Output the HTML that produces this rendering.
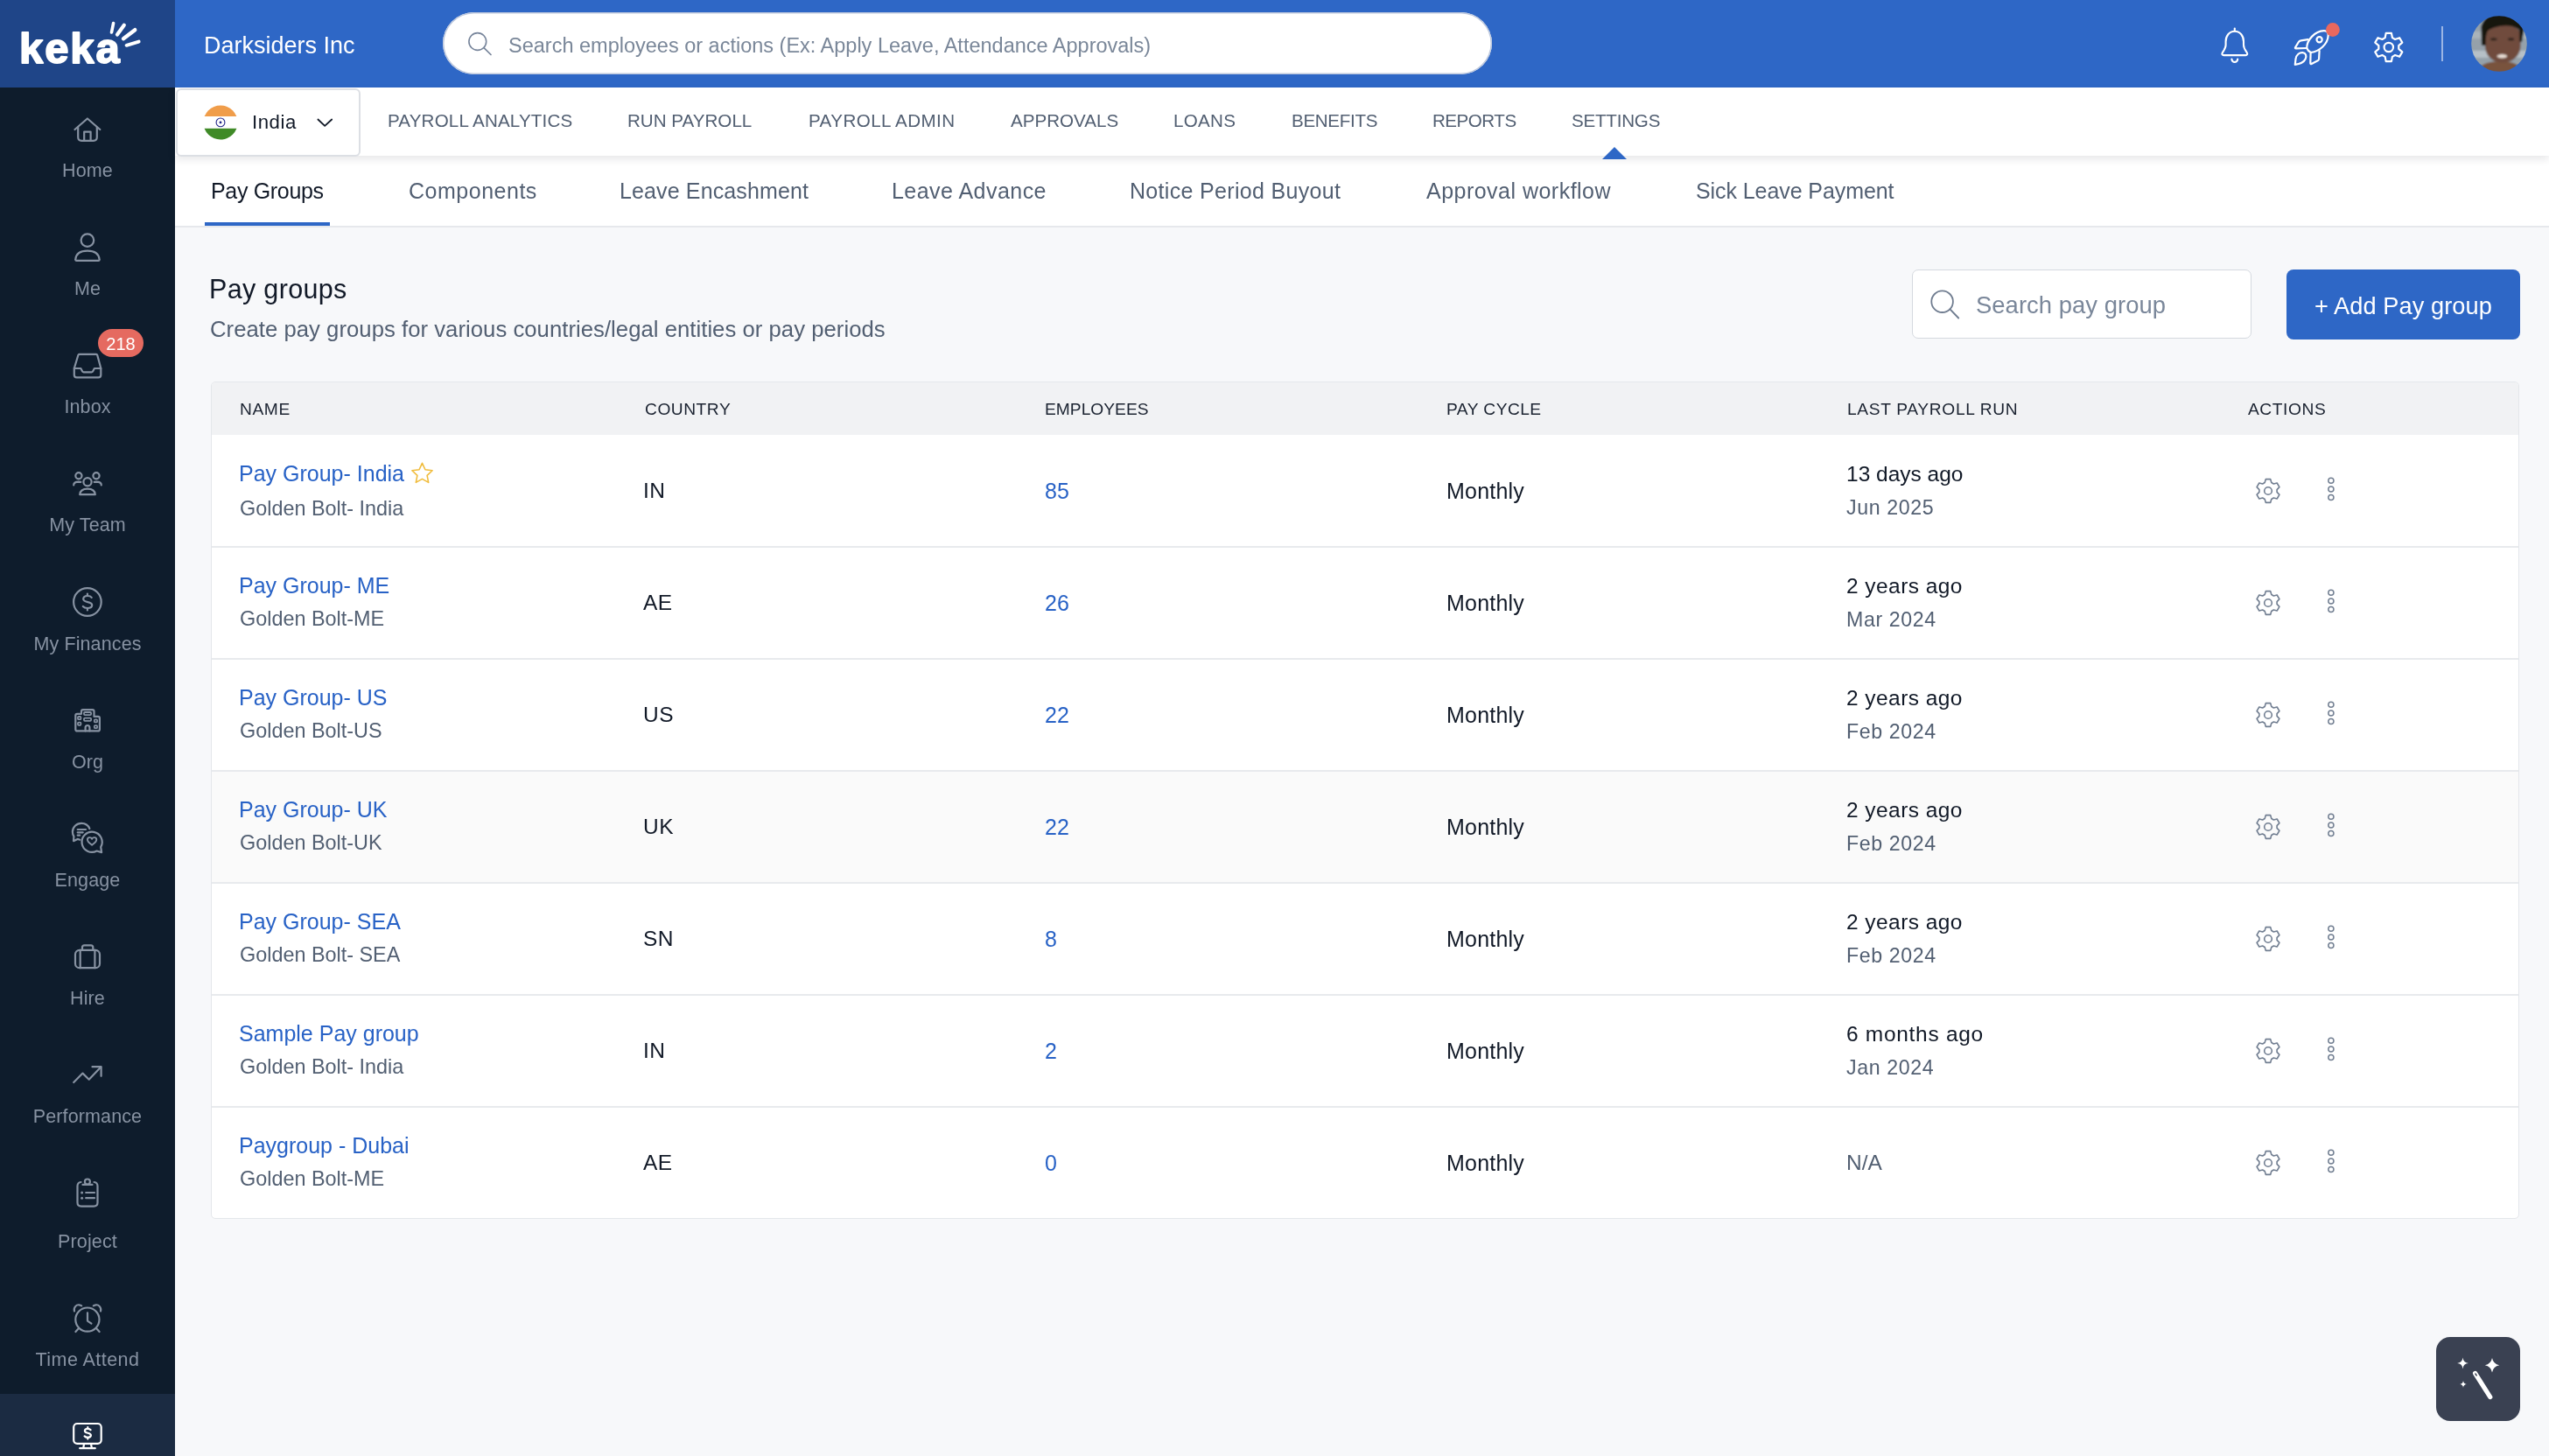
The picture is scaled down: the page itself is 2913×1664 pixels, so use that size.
<!DOCTYPE html>
<html><head><meta charset="utf-8"><style>
html,body{margin:0;padding:0;width:2913px;height:1664px;overflow:hidden;background:#f7f8fa;font-family:"Liberation Sans", sans-serif;}
.r{position:absolute;}
.t{position:absolute;white-space:nowrap;line-height:1;will-change:transform;}
svg.ov{position:absolute;left:0;top:0;z-index:10;pointer-events:none;}
</style></head><body>
<div class="r" style="left:0px;top:0px;width:2913px;height:1664px;background:#f7f8fa;"></div><div class="r" style="left:0px;top:0px;width:200px;height:1664px;background:#0e1c2c;"></div><div class="r" style="left:0px;top:0px;width:200px;height:100px;background:#1f4588;"></div><div class="r" style="left:200px;top:0px;width:2713px;height:100px;background:#2e67c6;"></div><div class="r" style="left:0px;top:1593px;width:200px;height:71px;background:#1b2b42;"></div><div class="r" style="left:200px;top:100px;width:2713px;height:78px;background:#ffffff;box-shadow:0 4px 9px rgba(16,24,40,0.10);z-index:2"></div><div class="r" style="left:200px;top:178px;width:2713px;height:80px;background:#ffffff;border-bottom:2px solid #e6e8ec;"></div>
<div class="t" style="top:38.5px;font-size:27px;color:#ffffff;left:232.5px;">Darksiders Inc</div><div class="r" style="left:506px;top:14px;width:1199px;height:71px;background:#ffffff;border-radius:36px;box-shadow:inset 0 0 0 1.5px #bcc7dc;"></div><div class="t" style="top:40.8px;font-size:23.5px;color:#7a8799;left:581.0px;">Search employees or actions (Ex: Apply Leave, Attendance Approvals)</div><div class="r" style="left:200.5px;top:100.5px;width:211.5px;height:78.5px;background:#ffffff;border:2px solid #dcdfe4;border-radius:6px;box-sizing:border-box;z-index:3"></div><div class="t" style="top:129.4px;font-size:22.2px;color:#111927;letter-spacing:0.55px;left:287.5px;z-index:4">India</div><div class="t" style="top:127.9px;font-size:20.6px;color:#525f72;letter-spacing:0.156px;left:443.0px;z-index:4">PAYROLL ANALYTICS</div><div class="t" style="top:127.9px;font-size:20.6px;color:#525f72;left:717.0px;z-index:4">RUN PAYROLL</div><div class="t" style="top:127.9px;font-size:20.6px;color:#525f72;letter-spacing:0.417px;left:924.0px;z-index:4">PAYROLL ADMIN</div><div class="t" style="top:127.9px;font-size:20.6px;color:#525f72;left:1155.0px;z-index:4">APPROVALS</div><div class="t" style="top:127.9px;font-size:20.6px;color:#525f72;letter-spacing:0.27px;left:1341.4px;z-index:4">LOANS</div><div class="t" style="top:127.9px;font-size:20.6px;color:#525f72;letter-spacing:-0.33px;left:1476.0px;z-index:4">BENEFITS</div><div class="t" style="top:127.9px;font-size:20.6px;color:#525f72;letter-spacing:-0.5px;left:1637.2px;z-index:4">REPORTS</div><div class="t" style="top:127.9px;font-size:20.6px;color:#525f72;letter-spacing:-0.23px;left:1796.4px;z-index:4">SETTINGS</div><div class="t" style="top:205.8px;font-size:25px;color:#111927;letter-spacing:-0.33px;left:241.0px;">Pay Groups</div><div class="t" style="top:205.8px;font-size:25px;color:#525f72;letter-spacing:0.51px;left:467.0px;">Components</div><div class="t" style="top:205.8px;font-size:25px;color:#525f72;letter-spacing:0.13px;left:708.0px;">Leave Encashment</div><div class="t" style="top:205.8px;font-size:25px;color:#525f72;letter-spacing:0.46px;left:1019.0px;">Leave Advance</div><div class="t" style="top:205.8px;font-size:25px;color:#525f72;letter-spacing:0.32px;left:1291.4px;">Notice Period Buyout</div><div class="t" style="top:205.8px;font-size:25px;color:#525f72;letter-spacing:0.48px;left:1630.4px;">Approval workflow</div><div class="t" style="top:205.8px;font-size:25px;color:#525f72;letter-spacing:-0.08px;left:1937.8px;">Sick Leave Payment</div><div class="r" style="left:234px;top:254px;width:143px;height:4px;background:#2e67c6;"></div><div class="t" style="top:314.6px;font-size:30.5px;color:#111927;letter-spacing:0.33px;left:239.0px;">Pay groups</div><div class="t" style="top:364.2px;font-size:25.7px;color:#525f72;letter-spacing:0.03px;left:240.0px;">Create pay groups for various countries/legal entities or pay periods</div><div class="r" style="left:2185px;top:308px;width:388px;height:79px;background:#ffffff;border:1.5px solid #d5d9df;border-radius:7px;box-sizing:border-box;"></div><div class="t" style="top:335.4px;font-size:27.4px;color:#7a879a;letter-spacing:0.05px;left:2258.0px;">Search pay group</div><div class="r" style="left:2613px;top:308px;width:267px;height:80px;background:#2e67c6;border-radius:8px;"></div><div class="t" style="top:335.6px;font-size:27.2px;color:#ffffff;letter-spacing:0.07px;left:2645.0px;">+ Add Pay group</div><div class="r" style="left:241px;top:436px;width:2638px;height:957px;background:#ffffff;border:1.5px solid #e4e7eb;border-radius:5px;box-sizing:border-box;"></div><div class="r" style="left:242px;top:437px;width:2636px;height:60px;background:#f1f2f4;border-radius:4px 4px 0 0;"></div><div class="t" style="top:458.2px;font-size:19.2px;color:#1a2230;letter-spacing:0.6px;left:274.4px;">NAME</div><div class="t" style="top:458.2px;font-size:19.2px;color:#1a2230;letter-spacing:0.53px;left:736.5px;">COUNTRY</div><div class="t" style="top:458.2px;font-size:19.2px;color:#1a2230;letter-spacing:0.02px;left:1194.3px;">EMPLOYEES</div><div class="t" style="top:458.2px;font-size:19.2px;color:#1a2230;letter-spacing:0.45px;left:1652.6px;">PAY CYCLE</div><div class="t" style="top:458.2px;font-size:19.2px;color:#1a2230;letter-spacing:0.66px;left:2110.5px;">LAST PAYROLL RUN</div><div class="t" style="top:458.2px;font-size:19.2px;color:#1a2230;letter-spacing:0.57px;left:2568.5px;">ACTIONS</div><div class="t" style="top:529.0px;font-size:25px;color:#2862c6;left:273.0px;">Pay Group- India</div><div class="t" style="top:570.3px;font-size:23.4px;color:#525f72;left:273.8px;">Golden Bolt- India</div><div class="t" style="top:549.4px;font-size:24.5px;color:#111927;letter-spacing:0.5px;left:735.2px;">IN</div><div class="t" style="top:549.0px;font-size:25px;color:#2862c6;left:1194.3px;">85</div><div class="t" style="top:549.0px;font-size:25px;color:#111927;letter-spacing:0.22px;left:1652.6px;">Monthly</div><div class="t" style="top:529.8px;font-size:24.5px;color:#111927;left:2109.5px;">13 days ago</div><div class="t" style="top:568.9px;font-size:23.2px;color:#525f72;letter-spacing:0.6px;left:2110.0px;">Jun 2025</div><div class="r" style="left:242px;top:624px;width:2636px;height:2px;background:#e8eaed;"></div><div class="t" style="top:657.0px;font-size:25px;color:#2862c6;left:273.0px;">Pay Group- ME</div><div class="t" style="top:696.1px;font-size:23.4px;color:#525f72;left:273.8px;">Golden Bolt-ME</div><div class="t" style="top:677.4px;font-size:24.5px;color:#111927;letter-spacing:0.5px;left:735.2px;">AE</div><div class="t" style="top:677.0px;font-size:25px;color:#2862c6;left:1194.3px;">26</div><div class="t" style="top:677.0px;font-size:25px;color:#111927;letter-spacing:0.22px;left:1652.6px;">Monthly</div><div class="t" style="top:657.8px;font-size:24.5px;color:#111927;letter-spacing:0.44px;left:2110.4px;">2 years ago</div><div class="t" style="top:696.9px;font-size:23.2px;color:#525f72;letter-spacing:0.6px;left:2110.0px;">Mar 2024</div><div class="r" style="left:242px;top:752px;width:2636px;height:2px;background:#e8eaed;"></div><div class="t" style="top:785.0px;font-size:25px;color:#2862c6;left:273.0px;">Pay Group- US</div><div class="t" style="top:824.1px;font-size:23.4px;color:#525f72;left:273.8px;">Golden Bolt-US</div><div class="t" style="top:805.4px;font-size:24.5px;color:#111927;letter-spacing:0.5px;left:735.2px;">US</div><div class="t" style="top:805.0px;font-size:25px;color:#2862c6;left:1194.3px;">22</div><div class="t" style="top:805.0px;font-size:25px;color:#111927;letter-spacing:0.22px;left:1652.6px;">Monthly</div><div class="t" style="top:785.8px;font-size:24.5px;color:#111927;letter-spacing:0.44px;left:2110.4px;">2 years ago</div><div class="t" style="top:824.9px;font-size:23.2px;color:#525f72;letter-spacing:0.6px;left:2110.0px;">Feb 2024</div><div class="r" style="left:242px;top:881px;width:2636px;height:127px;background:#fafafa;"></div><div class="r" style="left:242px;top:880px;width:2636px;height:2px;background:#e8eaed;"></div><div class="t" style="top:913.0px;font-size:25px;color:#2862c6;left:273.0px;">Pay Group- UK</div><div class="t" style="top:952.1px;font-size:23.4px;color:#525f72;left:273.8px;">Golden Bolt-UK</div><div class="t" style="top:933.4px;font-size:24.5px;color:#111927;letter-spacing:0.5px;left:735.2px;">UK</div><div class="t" style="top:933.0px;font-size:25px;color:#2862c6;left:1194.3px;">22</div><div class="t" style="top:933.0px;font-size:25px;color:#111927;letter-spacing:0.22px;left:1652.6px;">Monthly</div><div class="t" style="top:913.8px;font-size:24.5px;color:#111927;letter-spacing:0.44px;left:2110.4px;">2 years ago</div><div class="t" style="top:952.9px;font-size:23.2px;color:#525f72;letter-spacing:0.6px;left:2110.0px;">Feb 2024</div><div class="r" style="left:242px;top:1008px;width:2636px;height:2px;background:#e8eaed;"></div><div class="t" style="top:1041.0px;font-size:25px;color:#2862c6;left:273.0px;">Pay Group- SEA</div><div class="t" style="top:1080.1px;font-size:23.4px;color:#525f72;left:273.8px;">Golden Bolt- SEA</div><div class="t" style="top:1061.4px;font-size:24.5px;color:#111927;letter-spacing:0.5px;left:735.2px;">SN</div><div class="t" style="top:1061.0px;font-size:25px;color:#2862c6;left:1194.3px;">8</div><div class="t" style="top:1061.0px;font-size:25px;color:#111927;letter-spacing:0.22px;left:1652.6px;">Monthly</div><div class="t" style="top:1041.8px;font-size:24.5px;color:#111927;letter-spacing:0.44px;left:2110.4px;">2 years ago</div><div class="t" style="top:1080.9px;font-size:23.2px;color:#525f72;letter-spacing:0.6px;left:2110.0px;">Feb 2024</div><div class="r" style="left:242px;top:1136px;width:2636px;height:2px;background:#e8eaed;"></div><div class="t" style="top:1169.0px;font-size:25px;color:#2862c6;left:273.0px;">Sample Pay group</div><div class="t" style="top:1208.1px;font-size:23.4px;color:#525f72;left:273.8px;">Golden Bolt- India</div><div class="t" style="top:1189.4px;font-size:24.5px;color:#111927;letter-spacing:0.5px;left:735.2px;">IN</div><div class="t" style="top:1189.0px;font-size:25px;color:#2862c6;left:1194.3px;">2</div><div class="t" style="top:1189.0px;font-size:25px;color:#111927;letter-spacing:0.22px;left:1652.6px;">Monthly</div><div class="t" style="top:1169.8px;font-size:24.5px;color:#111927;letter-spacing:0.7px;left:2110.4px;">6 months ago</div><div class="t" style="top:1208.9px;font-size:23.2px;color:#525f72;letter-spacing:0.6px;left:2110.0px;">Jan 2024</div><div class="r" style="left:242px;top:1264px;width:2636px;height:2px;background:#e8eaed;"></div><div class="t" style="top:1297.0px;font-size:25px;color:#2862c6;left:273.0px;">Paygroup - Dubai</div><div class="t" style="top:1336.1px;font-size:23.4px;color:#525f72;left:273.8px;">Golden Bolt-ME</div><div class="t" style="top:1317.4px;font-size:24.5px;color:#111927;letter-spacing:0.5px;left:735.2px;">AE</div><div class="t" style="top:1317.0px;font-size:25px;color:#2862c6;left:1194.3px;">0</div><div class="t" style="top:1317.0px;font-size:25px;color:#111927;letter-spacing:0.22px;left:1652.6px;">Monthly</div><div class="t" style="top:1317.4px;font-size:24.5px;color:#525f72;left:2110.4px;">N/A</div><div class="t" style="top:185.1px;font-size:21.5px;color:#8792a2;letter-spacing:0.12px;left:-200.0px;width:600px;text-align:center;">Home</div><div class="t" style="top:320.3px;font-size:21.5px;color:#8792a2;letter-spacing:0.12px;left:-200.0px;width:600px;text-align:center;">Me</div><div class="t" style="top:455.3px;font-size:21.5px;color:#8792a2;letter-spacing:0.12px;left:-200.0px;width:600px;text-align:center;">Inbox</div><div class="t" style="top:590.3px;font-size:21.5px;color:#8792a2;letter-spacing:0.12px;left:-200.0px;width:600px;text-align:center;">My Team</div><div class="t" style="top:725.8px;font-size:21.5px;color:#8792a2;letter-spacing:0.12px;left:-200.0px;width:600px;text-align:center;">My Finances</div><div class="t" style="top:860.6px;font-size:21.5px;color:#8792a2;letter-spacing:0.12px;left:-200.0px;width:600px;text-align:center;">Org</div><div class="t" style="top:995.8px;font-size:21.5px;color:#8792a2;letter-spacing:0.12px;left:-200.0px;width:600px;text-align:center;">Engage</div><div class="t" style="top:1130.8px;font-size:21.5px;color:#8792a2;letter-spacing:0.12px;left:-200.0px;width:600px;text-align:center;">Hire</div><div class="t" style="top:1265.6px;font-size:21.5px;color:#8792a2;letter-spacing:0.12px;left:-200.0px;width:600px;text-align:center;">Performance</div><div class="t" style="top:1408.5px;font-size:21.5px;color:#8792a2;letter-spacing:0.12px;left:-200.0px;width:600px;text-align:center;">Project</div><div class="t" style="top:1543.8px;font-size:21.5px;color:#8792a2;letter-spacing:0.45px;left:-200.0px;width:600px;text-align:center;">Time Attend</div><div class="r" style="left:112px;top:376px;width:52px;height:32px;background:#e56a60;border-radius:16px;"></div><div class="t" style="top:383.0px;font-size:20px;color:#ffffff;left:-162.0px;width:600px;text-align:center;">218</div><div class="r" style="left:2784px;top:1528px;width:96px;height:96px;background:#3a4152;border-radius:16px;"></div>
<svg class="ov" width="2913" height="1664" viewBox="0 0 2913 1664"><text x="22" y="72" font-family="Liberation Sans" font-weight="700" font-size="49" fill="#fff" stroke="#fff" stroke-width="1.8" stroke-linejoin="round" letter-spacing="1.9">keka</text><line x1="127.5" y1="37" x2="129.6" y2="26.5" stroke="#fff" stroke-width="3.6" stroke-linecap="round"/><line x1="134" y1="39.5" x2="141.8" y2="28.8" stroke="#fff" stroke-width="4.2" stroke-linecap="round"/><line x1="141" y1="44.2" x2="154.2" y2="34.2" stroke="#fff" stroke-width="4.4" stroke-linecap="round"/><line x1="144.6" y1="51.8" x2="158.6" y2="47.6" stroke="#fff" stroke-width="4.0" stroke-linecap="round"/><circle cx="545.8" cy="47.5" r="9.9" stroke="#76849a" stroke-width="1.6" fill="none"/><line x1="553" y1="54.6" x2="561" y2="62.5" stroke="#76849a" stroke-width="1.7" stroke-linecap="round"/><path d="M2553.8,35.8 C2547.5,35.8 2543.6,41 2543.6,47.5 L2543.6,51.5 C2543.6,55 2541.5,57.5 2539.8,60.2 C2538.9,61.8 2539.6,63.1 2541.3,63.1 L2566.3,63.1 C2568,63.1 2568.7,61.8 2567.8,60.2 C2566.1,57.5 2564,55 2564,51.5 L2564,47.5 C2564,41 2560.1,35.8 2553.8,35.8 Z" stroke="#fff" stroke-width="2.1" fill="none" stroke-linecap="round" stroke-linejoin="round"/><line x1="2553.8" y1="32.6" x2="2553.8" y2="35.5" stroke="#fff" stroke-width="2.1" stroke-linecap="round"/><path d="M2550.4,67.6 A3.4,3.4 0 0 0 2557.2,67.6" stroke="#fff" stroke-width="2.1" fill="none" stroke-linecap="round" stroke-linejoin="round"/><path d="M2636.2,55 C2636.2,46 2645,35.6 2655.8,35.2 C2659,35.1 2660.8,37 2660.7,40.2 C2660.4,50.5 2650.5,58.6 2641,60 C2638.8,59 2637,57.2 2636.2,55 Z" stroke="#fff" stroke-width="2.2" fill="none" stroke-linejoin="round" stroke-linecap="round"/><circle cx="2650.6" cy="45.3" r="3.1" stroke="#fff" stroke-width="2.2" fill="none" stroke-linejoin="round" stroke-linecap="round"/><path d="M2637.5,45.2 L2629.5,46.4 Q2627.6,46.8 2626.7,48.3 L2623,54.3 Q2622.6,55.3 2623.8,55.3 L2636.2,55" stroke="#fff" stroke-width="2.2" fill="none" stroke-linejoin="round" stroke-linecap="round"/><path d="M2650.6,58.2 L2650.1,67.3 Q2650,68.7 2648.8,69.3 L2641.6,73 Q2640.3,73.6 2640.3,72.3 L2640.6,60.2" stroke="#fff" stroke-width="2.2" fill="none" stroke-linejoin="round" stroke-linecap="round"/><path d="M2622.8,73.8 L2623.5,67.5 C2624.2,62.3 2628,59.8 2631.5,60.1 C2635.2,60.5 2636.3,64 2634.6,67.6 C2632.6,71.6 2628.3,73.3 2622.8,73.8 Z" stroke="#fff" stroke-width="2.2" fill="none" stroke-linejoin="round" stroke-linecap="round"/><circle cx="2665.9" cy="34" r="7.9" fill="#e8685f"/><path d="M2725.64,43.17 L2726.67,37.90 L2732.93,37.90 L2733.96,43.17 L2737.10,44.99 L2742.18,43.24 L2745.31,48.66 L2741.26,52.19 L2741.26,55.81 L2745.31,59.34 L2742.18,64.76 L2737.10,63.01 L2733.96,64.83 L2732.93,70.10 L2726.67,70.10 L2725.64,64.83 L2722.50,63.01 L2717.42,64.76 L2714.29,59.34 L2718.34,55.81 L2718.34,52.19 L2714.29,48.66 L2717.42,43.24 L2722.50,44.99 Z" stroke="#fff" stroke-width="2.2" fill="none" stroke-linecap="round" stroke-linejoin="round"/><circle cx="2729.8" cy="54" r="5.2" stroke="#fff" stroke-width="2.2" fill="none"/><rect x="2790" y="30" width="2" height="40" fill="#9bb5e4"/><defs><clipPath id="av"><circle cx="2856" cy="50" r="31.8"/></clipPath></defs><defs><filter id="avb" x="-10%" y="-10%" width="120%" height="120%"><feGaussianBlur stdDeviation="1.1"/></filter></defs><g clip-path="url(#av)"><g filter="url(#avb)"><rect x="2820" y="14" width="72" height="72" fill="#95a1aa"/><rect x="2820" y="36" width="72" height="8" fill="#a9b3ba"/><rect x="2820" y="58" width="72" height="8" fill="#b6c0c7"/><path d="M2828,88 C2831,74 2842,70 2858,70 C2872,70 2882,74 2886,88 Z" fill="#79533c"/><path d="M2840,42 C2840,32 2848,28.5 2860,28.5 C2872,28.5 2880.5,32 2880.5,42 L2880.5,52 C2880.5,64 2871,71.5 2860,71.5 C2849,71.5 2840,64 2840,52 Z" fill="#6f4c3e"/><path d="M2836,52 L2835.5,30 C2839,19 2849,14 2860,14 C2873,14 2884,20 2884.5,34 L2882,48 L2879.6,48 C2879.2,41 2879.6,36.5 2878.2,33.4 C2872,29 2864,28.6 2858,29.8 C2850,31.3 2845,33.3 2843.4,35 C2841,38 2840.6,44 2840.6,52 Z" fill="#151210"/><ellipse cx="2859.4" cy="64.2" rx="5.8" ry="2.2" fill="#e9ded6"/><ellipse cx="2849.8" cy="44.8" rx="3.8" ry="1.5" fill="#2e201a"/><ellipse cx="2869.6" cy="44.8" rx="3.6" ry="1.5" fill="#2e201a"/></g></g><defs><clipPath id="fl"><circle cx="252" cy="140" r="19.6"/></clipPath></defs><g clip-path="url(#fl)"><rect x="232" y="120" width="40" height="13" fill="#f09d4a"/><rect x="232" y="133" width="40" height="13.8" fill="#ffffff"/><rect x="232" y="146.8" width="40" height="14" fill="#3f8a27"/></g><circle cx="252" cy="139.9" r="4.9" stroke="#23278a" stroke-width="1.1" fill="none"/><circle cx="252" cy="139.9" r="1.4" fill="#23278a"/><path d="M363.4,136.5 L371.2,143.8 L379.2,136.5" stroke="#111927" stroke-width="1.8" fill="none" stroke-linecap="round" stroke-linejoin="round"/><path d="M1831,182 L1845,168 L1859,182 Z" fill="#2e67c6"/><circle cx="2219.6" cy="344.7" r="12.3" stroke="#707d90" stroke-width="1.8" fill="none"/><line x1="2228.5" y1="353.3" x2="2238.2" y2="363.5" stroke="#707d90" stroke-width="1.9" stroke-linecap="round"/><path d="M482.50,529.30 L485.97,536.73 L494.10,537.73 L488.11,543.32 L489.67,551.37 L482.50,547.40 L475.33,551.37 L476.89,543.32 L470.90,537.73 L479.03,536.73 Z" stroke="#f0bc3c" stroke-width="1.6" fill="none" stroke-linecap="round" stroke-linejoin="round"/><path d="M2588.18,551.54 L2589.29,547.67 L2594.71,547.67 L2595.82,551.54 L2598.28,552.96 L2602.19,551.99 L2604.90,556.68 L2602.10,559.58 L2602.10,562.42 L2604.90,565.32 L2602.19,570.01 L2598.28,569.04 L2595.82,570.46 L2594.71,574.33 L2589.29,574.33 L2588.18,570.46 L2585.72,569.04 L2581.81,570.01 L2579.10,565.32 L2581.90,562.42 L2581.90,559.58 L2579.10,556.68 L2581.81,551.99 L2585.72,552.96 Z" stroke="#717e91" stroke-width="1.6" fill="none" stroke-linecap="round" stroke-linejoin="round"/><circle cx="2592" cy="561" r="4.3" stroke="#717e91" stroke-width="1.6" fill="none"/><circle cx="2663.9" cy="549.3" r="3.05" stroke="#717e91" stroke-width="1.5" fill="none"/><circle cx="2663.9" cy="559.0" r="3.05" stroke="#717e91" stroke-width="1.5" fill="none"/><circle cx="2663.9" cy="568.5" r="3.05" stroke="#717e91" stroke-width="1.5" fill="none"/><path d="M2588.18,679.54 L2589.29,675.67 L2594.71,675.67 L2595.82,679.54 L2598.28,680.96 L2602.19,679.99 L2604.90,684.68 L2602.10,687.58 L2602.10,690.42 L2604.90,693.32 L2602.19,698.01 L2598.28,697.04 L2595.82,698.46 L2594.71,702.33 L2589.29,702.33 L2588.18,698.46 L2585.72,697.04 L2581.81,698.01 L2579.10,693.32 L2581.90,690.42 L2581.90,687.58 L2579.10,684.68 L2581.81,679.99 L2585.72,680.96 Z" stroke="#717e91" stroke-width="1.6" fill="none" stroke-linecap="round" stroke-linejoin="round"/><circle cx="2592" cy="689" r="4.3" stroke="#717e91" stroke-width="1.6" fill="none"/><circle cx="2663.9" cy="677.3" r="3.05" stroke="#717e91" stroke-width="1.5" fill="none"/><circle cx="2663.9" cy="687.0" r="3.05" stroke="#717e91" stroke-width="1.5" fill="none"/><circle cx="2663.9" cy="696.5" r="3.05" stroke="#717e91" stroke-width="1.5" fill="none"/><path d="M2588.18,807.54 L2589.29,803.67 L2594.71,803.67 L2595.82,807.54 L2598.28,808.96 L2602.19,807.99 L2604.90,812.68 L2602.10,815.58 L2602.10,818.42 L2604.90,821.32 L2602.19,826.01 L2598.28,825.04 L2595.82,826.46 L2594.71,830.33 L2589.29,830.33 L2588.18,826.46 L2585.72,825.04 L2581.81,826.01 L2579.10,821.32 L2581.90,818.42 L2581.90,815.58 L2579.10,812.68 L2581.81,807.99 L2585.72,808.96 Z" stroke="#717e91" stroke-width="1.6" fill="none" stroke-linecap="round" stroke-linejoin="round"/><circle cx="2592" cy="817" r="4.3" stroke="#717e91" stroke-width="1.6" fill="none"/><circle cx="2663.9" cy="805.3" r="3.05" stroke="#717e91" stroke-width="1.5" fill="none"/><circle cx="2663.9" cy="815.0" r="3.05" stroke="#717e91" stroke-width="1.5" fill="none"/><circle cx="2663.9" cy="824.5" r="3.05" stroke="#717e91" stroke-width="1.5" fill="none"/><path d="M2588.18,935.54 L2589.29,931.67 L2594.71,931.67 L2595.82,935.54 L2598.28,936.96 L2602.19,935.99 L2604.90,940.68 L2602.10,943.58 L2602.10,946.42 L2604.90,949.32 L2602.19,954.01 L2598.28,953.04 L2595.82,954.46 L2594.71,958.33 L2589.29,958.33 L2588.18,954.46 L2585.72,953.04 L2581.81,954.01 L2579.10,949.32 L2581.90,946.42 L2581.90,943.58 L2579.10,940.68 L2581.81,935.99 L2585.72,936.96 Z" stroke="#717e91" stroke-width="1.6" fill="none" stroke-linecap="round" stroke-linejoin="round"/><circle cx="2592" cy="945" r="4.3" stroke="#717e91" stroke-width="1.6" fill="none"/><circle cx="2663.9" cy="933.3" r="3.05" stroke="#717e91" stroke-width="1.5" fill="none"/><circle cx="2663.9" cy="943.0" r="3.05" stroke="#717e91" stroke-width="1.5" fill="none"/><circle cx="2663.9" cy="952.5" r="3.05" stroke="#717e91" stroke-width="1.5" fill="none"/><path d="M2588.18,1063.54 L2589.29,1059.67 L2594.71,1059.67 L2595.82,1063.54 L2598.28,1064.96 L2602.19,1063.99 L2604.90,1068.68 L2602.10,1071.58 L2602.10,1074.42 L2604.90,1077.32 L2602.19,1082.01 L2598.28,1081.04 L2595.82,1082.46 L2594.71,1086.33 L2589.29,1086.33 L2588.18,1082.46 L2585.72,1081.04 L2581.81,1082.01 L2579.10,1077.32 L2581.90,1074.42 L2581.90,1071.58 L2579.10,1068.68 L2581.81,1063.99 L2585.72,1064.96 Z" stroke="#717e91" stroke-width="1.6" fill="none" stroke-linecap="round" stroke-linejoin="round"/><circle cx="2592" cy="1073" r="4.3" stroke="#717e91" stroke-width="1.6" fill="none"/><circle cx="2663.9" cy="1061.3" r="3.05" stroke="#717e91" stroke-width="1.5" fill="none"/><circle cx="2663.9" cy="1071.0" r="3.05" stroke="#717e91" stroke-width="1.5" fill="none"/><circle cx="2663.9" cy="1080.5" r="3.05" stroke="#717e91" stroke-width="1.5" fill="none"/><path d="M2588.18,1191.54 L2589.29,1187.67 L2594.71,1187.67 L2595.82,1191.54 L2598.28,1192.96 L2602.19,1191.99 L2604.90,1196.68 L2602.10,1199.58 L2602.10,1202.42 L2604.90,1205.32 L2602.19,1210.01 L2598.28,1209.04 L2595.82,1210.46 L2594.71,1214.33 L2589.29,1214.33 L2588.18,1210.46 L2585.72,1209.04 L2581.81,1210.01 L2579.10,1205.32 L2581.90,1202.42 L2581.90,1199.58 L2579.10,1196.68 L2581.81,1191.99 L2585.72,1192.96 Z" stroke="#717e91" stroke-width="1.6" fill="none" stroke-linecap="round" stroke-linejoin="round"/><circle cx="2592" cy="1201" r="4.3" stroke="#717e91" stroke-width="1.6" fill="none"/><circle cx="2663.9" cy="1189.3" r="3.05" stroke="#717e91" stroke-width="1.5" fill="none"/><circle cx="2663.9" cy="1199.0" r="3.05" stroke="#717e91" stroke-width="1.5" fill="none"/><circle cx="2663.9" cy="1208.5" r="3.05" stroke="#717e91" stroke-width="1.5" fill="none"/><path d="M2588.18,1319.54 L2589.29,1315.67 L2594.71,1315.67 L2595.82,1319.54 L2598.28,1320.96 L2602.19,1319.99 L2604.90,1324.68 L2602.10,1327.58 L2602.10,1330.42 L2604.90,1333.32 L2602.19,1338.01 L2598.28,1337.04 L2595.82,1338.46 L2594.71,1342.33 L2589.29,1342.33 L2588.18,1338.46 L2585.72,1337.04 L2581.81,1338.01 L2579.10,1333.32 L2581.90,1330.42 L2581.90,1327.58 L2579.10,1324.68 L2581.81,1319.99 L2585.72,1320.96 Z" stroke="#717e91" stroke-width="1.6" fill="none" stroke-linecap="round" stroke-linejoin="round"/><circle cx="2592" cy="1329" r="4.3" stroke="#717e91" stroke-width="1.6" fill="none"/><circle cx="2663.9" cy="1317.3" r="3.05" stroke="#717e91" stroke-width="1.5" fill="none"/><circle cx="2663.9" cy="1327.0" r="3.05" stroke="#717e91" stroke-width="1.5" fill="none"/><circle cx="2663.9" cy="1336.5" r="3.05" stroke="#717e91" stroke-width="1.5" fill="none"/><path d="M85.5,148 L99.9,135.5 L114.3,148" stroke="#8792a2" stroke-width="2.2" fill="none" stroke-linecap="round" stroke-linejoin="round"/><path d="M89.2,145.5 L89.2,156.8 Q89.2,160.8 93.2,160.8 L106.8,160.8 Q110.8,160.8 110.8,156.8 L110.8,145.5" stroke="#8792a2" stroke-width="2.2" fill="none" stroke-linecap="round" stroke-linejoin="round"/><path d="M96.2,160.8 L96.2,150.6 L103.6,150.6 L103.6,160.8" stroke="#8792a2" stroke-width="2.2" fill="none" stroke-linecap="round" stroke-linejoin="round"/><circle cx="99.9" cy="274.6" r="7.3" stroke="#8792a2" stroke-width="2.2" fill="none" stroke-linecap="round" stroke-linejoin="round"/><path d="M86.3,296.5 C86.8,290 92,286.6 99.9,286.6 C107.8,286.6 113,290 113.6,296.5 Q113.8,297.9 112.4,297.9 L87.5,297.9 Q86.1,297.9 86.3,296.5 Z" stroke="#8792a2" stroke-width="2.2" fill="none" stroke-linecap="round" stroke-linejoin="round"/><path d="M84.8,421 L89.4,405.8 Q89.7,404.9 90.6,404.9 L110,404.9 Q110.9,404.9 111.2,405.8 L115.3,421 L115.3,428.5 Q115.3,431.3 112.5,431.3 L87.6,431.3 Q84.8,431.3 84.8,428.5 Z" stroke="#8792a2" stroke-width="2.2" fill="none" stroke-linecap="round" stroke-linejoin="round"/><path d="M84.8,421 L92.3,421 L94.3,424.7 Q94.8,425.4 95.6,425.4 L104.6,425.4 Q105.4,425.4 105.9,424.7 L107.9,421 L115.3,421" stroke="#8792a2" stroke-width="2.2" fill="none" stroke-linecap="round" stroke-linejoin="round"/><circle cx="100" cy="550.7" r="4.6" stroke="#8792a2" stroke-width="2.2" fill="none" stroke-linecap="round" stroke-linejoin="round"/><path d="M91.2,565.2 C91.5,560.8 94.8,558.6 100,558.6 C105.2,558.6 108.5,560.8 108.8,565.2 Z" stroke="#8792a2" stroke-width="2.2" fill="none" stroke-linecap="round" stroke-linejoin="round"/><circle cx="89.9" cy="543.7" r="3.6" stroke="#8792a2" stroke-width="2.2" fill="none" stroke-linecap="round" stroke-linejoin="round"/><circle cx="110" cy="543.7" r="3.6" stroke="#8792a2" stroke-width="2.2" fill="none" stroke-linecap="round" stroke-linejoin="round"/><path d="M84.2,554.5 C84.2,551.8 86.2,550.6 89.6,550.6 L92.3,550.8" stroke="#8792a2" stroke-width="2.2" fill="none" stroke-linecap="round" stroke-linejoin="round"/><path d="M115.8,554.5 C115.8,551.8 113.8,550.6 110.4,550.6 L107.7,550.8" stroke="#8792a2" stroke-width="2.2" fill="none" stroke-linecap="round" stroke-linejoin="round"/><circle cx="99.9" cy="688" r="15.8" stroke="#8792a2" stroke-width="2.2" fill="none" stroke-linecap="round" stroke-linejoin="round"/><path d="M104.7,682.8 C103.8,681.6 102.3,681 100,681 C97.2,681 95.2,682.4 95.2,684.6 C95.2,689.5 105.2,686.8 105.2,691.6 C105.2,693.8 103.2,695 100,695 C97.5,695 95.8,694.2 94.8,693" stroke="#8792a2" stroke-width="2.2" fill="none" stroke-linecap="round" stroke-linejoin="round"/><path d="M99.9,678.6 L99.9,681 M99.9,695 L99.9,697.4" stroke="#8792a2" stroke-width="2.2" fill="none" stroke-linecap="round" stroke-linejoin="round"/><path d="M86.3,817.6 Q86.3,815.8 88.1,815.8 L93,815.8 L93,812.9 Q93,811.1 94.8,811.1 L105.7,811.1 Q107.5,811.1 107.5,812.9 L107.5,818.9 L112.1,818.9 Q113.9,818.9 113.9,820.7 L113.9,833.4 Q113.9,835.4 111.9,835.4 L88.3,835.4 Q86.3,835.4 86.3,833.4 Z" stroke="#8792a2" stroke-width="2.2" fill="none" stroke-linecap="round" stroke-linejoin="round"/><rect x="96" y="814" width="8.1" height="3.1" rx="1" stroke="#8792a2" stroke-width="1.8" fill="none"/><rect x="96" y="820.6" width="8.1" height="3.2" rx="1" stroke="#8792a2" stroke-width="1.8" fill="none"/><rect x="89" y="819" width="3.4" height="3.2" rx="1" stroke="#8792a2" stroke-width="1.8" fill="none"/><rect x="89" y="825.6" width="3.4" height="3.2" rx="1" stroke="#8792a2" stroke-width="1.8" fill="none"/><rect x="107.8" y="822.3" width="3.3" height="3.1" rx="1" stroke="#8792a2" stroke-width="1.8" fill="none"/><rect x="107.8" y="829.1" width="3.3" height="3.1" rx="1" stroke="#8792a2" stroke-width="1.8" fill="none"/><path d="M97.6,835.4 L97.6,831.6 Q97.6,829 100,829 Q102.4,829 102.4,831.6 L102.4,835.4" stroke="#8792a2" stroke-width="2.2" fill="none" stroke-linecap="round" stroke-linejoin="round"/><path d="M102.4,947 C100.8,943 97.3,940.8 93.1,940.8 C87.4,940.8 82.9,945.2 82.9,950.7 C82.9,952.6 83.4,954.4 84.4,955.9 L84,961.2 L88.6,958.9 L91.4,959.7" stroke="#8792a2" stroke-width="2.2" fill="none" stroke-linecap="round" stroke-linejoin="round"/><path d="M88.7,948 L98,948 M88.7,951.3 L94.7,951.3 M88.7,954.6 L91.2,954.6" stroke="#8792a2" stroke-width="2.2" fill="none" stroke-linecap="round" stroke-linejoin="round"/><path d="M115.2,968 L116.1,974.1 L110.6,972.5 A11.6,11.6 0 1 1 115.2,968 Z" stroke="#8792a2" stroke-width="2.2" fill="none" stroke-linecap="round" stroke-linejoin="round"/><path d="M105.1,958.8 C104,956.3 99.9,956.6 99.9,959.6 C99.9,962.4 103.1,964.3 105.1,965.7 C107.1,964.3 110.3,962.4 110.3,959.6 C110.3,956.6 106.2,956.3 105.1,958.8 Z" stroke="#8792a2" stroke-width="1.9" fill="none" stroke-linejoin="round"/><rect x="86" y="1085.8" width="28" height="20.4" rx="5" stroke="#8792a2" stroke-width="2.2" fill="none" stroke-linecap="round" stroke-linejoin="round"/><path d="M91.7,1085.8 L91.7,1106.2 M108.4,1085.8 L108.4,1106.2" stroke="#8792a2" stroke-width="2.2" fill="none" stroke-linecap="round" stroke-linejoin="round"/><path d="M94,1085.8 L94,1082.8 Q94,1080.3 96.5,1080.3 L103.8,1080.3 Q106.3,1080.3 106.3,1082.8 L106.3,1085.8" stroke="#8792a2" stroke-width="2.2" fill="none" stroke-linecap="round" stroke-linejoin="round"/><path d="M84.2,1237 L94.5,1226.6 L101.7,1233.7 L115.2,1219.6" stroke="#8792a2" stroke-width="2.2" fill="none" stroke-linecap="round" stroke-linejoin="round"/><path d="M105.5,1219.2 L115.6,1219.2 L115.6,1229.8" stroke="#8792a2" stroke-width="2.2" fill="none" stroke-linecap="round" stroke-linejoin="round"/><path d="M92.5,1351 Q88.5,1351.5 88.5,1355.5 L88.5,1374.3 Q88.5,1378.6 92.8,1378.6 L107.2,1378.6 Q111.5,1378.6 111.5,1374.3 L111.5,1355.5 Q111.5,1351.5 107.5,1351" stroke="#8792a2" stroke-width="2.2" fill="none" stroke-linecap="round" stroke-linejoin="round"/><path d="M94.5,1353.9 L105.5,1353.9" stroke="#8792a2" stroke-width="2.2" fill="none" stroke-linecap="round" stroke-linejoin="round"/><circle cx="99.9" cy="1350.5" r="3" stroke="#8792a2" stroke-width="2.2" fill="none" stroke-linecap="round" stroke-linejoin="round"/><path d="M98.2,1363 L108,1363 M98.2,1369.2 L108,1369.2" stroke="#8792a2" stroke-width="2.2" fill="none" stroke-linecap="round" stroke-linejoin="round"/><circle cx="93.6" cy="1363" r="1.5" fill="#8792a2"/><circle cx="93.6" cy="1369.2" r="1.5" fill="#8792a2"/><circle cx="99.9" cy="1508.1" r="13.6" stroke="#8792a2" stroke-width="2.2" fill="none" stroke-linecap="round" stroke-linejoin="round"/><path d="M100,1500.3 L100,1509.6 L104.4,1512.7" stroke="#8792a2" stroke-width="2.2" fill="none" stroke-linecap="round" stroke-linejoin="round"/><path d="M85,1498.5 C83.8,1494 87.4,1491 90.3,1491.3 C91.5,1491.4 92.5,1491.8 93.2,1492.4" stroke="#8792a2" stroke-width="2.2" fill="none" stroke-linecap="round" stroke-linejoin="round"/><path d="M115,1498.5 C116.2,1494 112.6,1491 109.7,1491.3 C108.5,1491.4 107.5,1491.8 106.8,1492.4" stroke="#8792a2" stroke-width="2.2" fill="none" stroke-linecap="round" stroke-linejoin="round"/><path d="M89.8,1518.3 L86.4,1522 M110.2,1518.3 L113.6,1522" stroke="#8792a2" stroke-width="2.2" fill="none" stroke-linecap="round" stroke-linejoin="round"/><rect x="84.2" y="1627" width="31.5" height="22.8" rx="4" stroke="#ffffff" stroke-width="2.2" fill="none" stroke-linecap="round" stroke-linejoin="round"/><path d="M96,1650 L95.3,1654.8 M104,1650 L104.8,1654.8 M91.2,1655.2 L108.8,1655.2" stroke="#ffffff" stroke-width="2.2" fill="none" stroke-linecap="round" stroke-linejoin="round"/><path d="M103.6,1634.2 C102.9,1633.3 101.7,1632.8 100.2,1632.8 C98.2,1632.8 96.9,1633.8 96.9,1635.3 C96.9,1638.7 103.9,1636.9 103.9,1640.3 C103.9,1641.9 102.5,1642.8 100.2,1642.8 C98.5,1642.8 97.3,1642.2 96.6,1641.3" stroke="#ffffff" stroke-width="2.2" fill="none" stroke-linecap="round" stroke-linejoin="round"/><path d="M100.3,1631 L100.3,1632.8 M100.3,1642.8 L100.3,1644.6" stroke="#ffffff" stroke-width="2.2" fill="none" stroke-linecap="round" stroke-linejoin="round"/><line x1="2828.6" y1="1569.5" x2="2845.8" y2="1596.6" stroke="#fff" stroke-width="5.2" stroke-linecap="round"/><line x1="2828.9" y1="1570" x2="2830.2" y2="1572" stroke="#3a4152" stroke-width="1.4" stroke-linecap="round"/><path d="M2848,1552.0 Q2849.312,1558.8880000000001 2856.2,1560.2 Q2849.312,1561.512 2848,1568.4 Q2846.688,1561.512 2839.8,1560.2 Q2846.688,1558.8880000000001 2848,1552.0 Z" fill="#fff"/><path d="M2814.5,1551.6 Q2815.012,1557.488 2820.9,1558 Q2815.012,1558.512 2814.5,1564.4 Q2813.988,1558.512 2808.1,1558 Q2813.988,1557.488 2814.5,1551.6 Z" fill="#fff"/><path d="M2815,1578.1 Q2815.312,1581.688 2818.9,1582 Q2815.312,1582.312 2815,1585.9 Q2814.688,1582.312 2811.1,1582 Q2814.688,1581.688 2815,1578.1 Z" fill="#fff"/></svg>
</body></html>
